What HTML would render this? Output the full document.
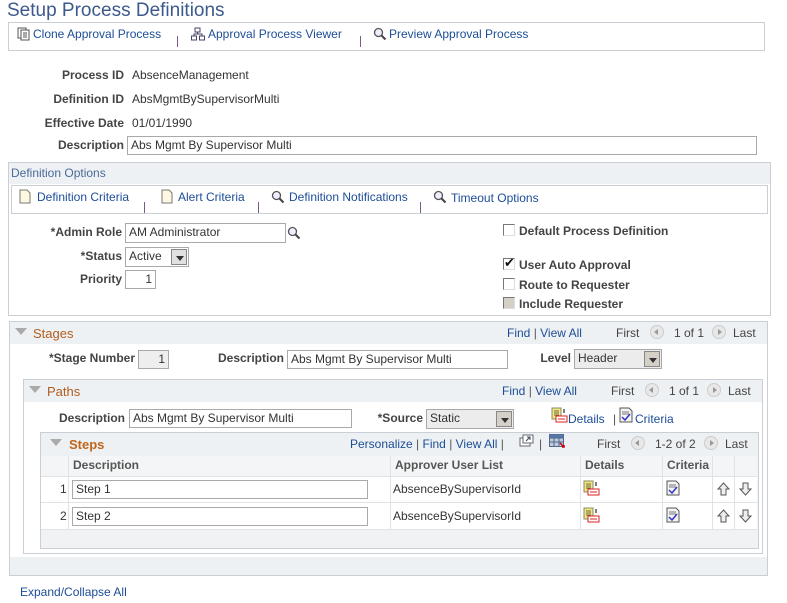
<!DOCTYPE html>
<html><head><meta charset="utf-8">
<style>
*{margin:0;padding:0;box-sizing:border-box}
body{width:787px;height:603px;background:#fff;font-family:"Liberation Sans",Arial,sans-serif;font-size:12px;color:#333;position:relative;overflow:hidden}
.a{position:absolute;white-space:nowrap}
.lbl{font-weight:bold;color:#444;text-align:right}
.lnk{color:#1c4d96}
.box{position:absolute;border:1px solid #c9cfd4}
.hdr{position:absolute;background:#eef1f3}
.inp{position:absolute;border:1px solid #a9a9a9;background:#fff;padding:1px 3px;font-size:12px;line-height:15px;color:#333}
.sel{position:absolute;border:1px solid #a9a9a9;background:#ececec;padding:1px 3px;line-height:15px}
.sel i{position:absolute;right:1px;top:1px;width:16px;bottom:1px;background:#d4d0c8;border:1px solid #888}
.sel i:after{content:"";position:absolute;left:4px;top:6px;border:4px solid transparent;border-top:5px solid #333}
.sep{position:absolute;width:1px;height:11px;background:#7a5a8a}
.cb{position:absolute;width:12px;height:12px;border:1px solid #777;border-right-color:#ddd;border-bottom-color:#ddd;background:#fff}
.tri{position:absolute;width:0;height:0;border:6px solid transparent;border-top:7px solid #aaa}
.nav{position:absolute;width:14px;height:14px;border-radius:50%;background:#e8e8e8;border:1px solid #ccc}
.nav.l:after{content:"";position:absolute;left:3px;top:3px;border:3px solid transparent;border-right:4px solid #999;border-left:0}
.nav.r:after{content:"";position:absolute;left:5px;top:3px;border:3px solid transparent;border-left:4px solid #999;border-right:0}
.ttl{color:#b25c1e;font-size:13px}
.col{position:absolute;top:456px;height:20px;border-right:1px solid #dfe3e6;font-weight:bold;color:#555;padding:2px 4px;background:#f4f5f6}
</style></head><body>

<div class="a" style="left:7px;top:0px;font-size:19px;color:#3d5a8c">Setup Process Definitions</div>

<div class="box" style="left:8px;top:22px;width:757px;height:29px"></div>
<svg class="a" style="left:17px;top:27px" width="14" height="14"><rect x="1" y="1" width="8" height="10" fill="#fff" stroke="#555"/><rect x="4" y="3" width="8" height="10" fill="#fff" stroke="#555"/><path d="M6 6h4M6 8h4M6 10h4" stroke="#555"/></svg>
<div class="a lnk" style="left:33px;top:27px">Clone Approval Process</div>
<div class="sep" style="left:177px;top:36px"></div>
<svg class="a" style="left:191px;top:27px" width="14" height="14"><rect x="4" y="1" width="5" height="4" fill="#fff" stroke="#446"/><rect x="0.5" y="9" width="5" height="4" fill="#fff" stroke="#446"/><rect x="8.5" y="9" width="5" height="4" fill="#fff" stroke="#446"/><path d="M6.5 5v2M3 9V7h8v2" stroke="#446" fill="none"/></svg>
<div class="a lnk" style="left:208px;top:27px">Approval Process Viewer</div>
<div class="sep" style="left:360px;top:36px"></div>
<svg class="a" style="left:373px;top:27px" width="14" height="14"><circle cx="5.5" cy="5.5" r="4" fill="#eef" stroke="#555" stroke-width="1.3"/><path d="M8.5 8.5l4 4" stroke="#444" stroke-width="2"/></svg>
<div class="a lnk" style="left:389px;top:27px">Preview Approval Process</div>

<div class="a lbl" style="right:663px;top:68px">Process ID</div>
<div class="a" style="left:132px;top:68px">AbsenceManagement</div>
<div class="a lbl" style="right:663px;top:92px">Definition ID</div>
<div class="a" style="left:132px;top:92px">AbsMgmtBySupervisorMulti</div>
<div class="a lbl" style="right:663px;top:116px">Effective Date</div>
<div class="a" style="left:132px;top:116px">01/01/1990</div>
<div class="a lbl" style="right:663px;top:138px">Description</div>
<div class="inp" style="left:127px;top:136px;width:630px;height:19px">Abs Mgmt By Supervisor Multi</div>

<div class="box" style="left:8px;top:162px;width:763px;height:154px"></div>
<div class="hdr" style="left:9px;top:163px;width:761px;height:21px"></div>
<div class="a" style="left:11px;top:166px;color:#4a6a9a">Definition Options</div>
<div class="box" style="left:11px;top:185px;width:757px;height:29px;background:#fff"></div>
<svg class="a" style="left:19px;top:189px" width="12" height="15"><path d="M1 1h7l3 3v10H1z" fill="#fff8e0" stroke="#777"/></svg>
<div class="a lnk" style="left:37px;top:190px">Definition Criteria</div>
<div class="sep" style="left:144px;top:202px"></div>
<svg class="a" style="left:161px;top:189px" width="12" height="15"><path d="M1 1h7l3 3v10H1z" fill="#fff8e0" stroke="#777"/></svg>
<div class="a lnk" style="left:178px;top:190px">Alert Criteria</div>
<div class="sep" style="left:258px;top:202px"></div>
<svg class="a" style="left:271px;top:190px" width="14" height="14"><circle cx="5.5" cy="5.5" r="4" fill="#eef" stroke="#555" stroke-width="1.3"/><path d="M8.5 8.5l4 4" stroke="#444" stroke-width="2"/></svg>
<div class="a lnk" style="left:289px;top:190px">Definition Notifications</div>
<div class="sep" style="left:420px;top:202px"></div>
<svg class="a" style="left:433px;top:190px" width="14" height="14"><circle cx="5.5" cy="5.5" r="4" fill="#eef" stroke="#555" stroke-width="1.3"/><path d="M8.5 8.5l4 4" stroke="#444" stroke-width="2"/></svg>
<div class="a lnk" style="left:451px;top:191px">Timeout Options</div>

<div class="a lbl" style="right:665px;top:225px">*Admin Role</div>
<div class="inp" style="left:125px;top:223px;width:161px;height:20px">AM Administrator</div>
<svg class="a" style="left:287px;top:226px" width="14" height="14"><circle cx="5.5" cy="5.5" r="4" fill="#eef" stroke="#555" stroke-width="1.3"/><path d="M8.5 8.5l4 4" stroke="#444" stroke-width="2"/></svg>
<div class="a lbl" style="right:665px;top:249px">*Status</div>
<div class="sel" style="left:125px;top:247px;width:64px;height:20px;background:#fff">Active<i style="background:#e0e0e0"></i></div>
<div class="a lbl" style="right:665px;top:272px">Priority</div>
<div class="inp" style="left:125px;top:270px;width:31px;height:19px;text-align:right">1</div>

<div class="cb" style="left:503px;top:224px"></div>
<div class="a lbl" style="left:519px;top:224px;text-align:left">Default Process Definition</div>
<div class="cb" style="left:503px;top:258px"></div>
<div class="a" style="left:504px;top:255px;font-size:13px;color:#111">✔</div>
<div class="a lbl" style="left:519px;top:258px;text-align:left">User Auto Approval</div>
<div class="cb" style="left:503px;top:278px"></div>
<div class="a lbl" style="left:519px;top:278px;text-align:left">Route to Requester</div>
<div class="cb" style="left:503px;top:297px;background:#d4d0c8"></div>
<div class="a lbl" style="left:519px;top:297px;text-align:left">Include Requester</div>

<!-- Stages -->
<div class="box" style="left:9px;top:321px;width:759px;height:255px"></div>
<div class="hdr" style="left:10px;top:322px;width:757px;height:22px"></div>
<div class="hdr" style="left:10px;top:557px;width:757px;height:18px"></div>
<div class="tri" style="left:15px;top:328px"></div>
<div class="a ttl" style="left:33px;top:326px">Stages</div>
<div class="a lnk" style="left:507px;top:326px">Find <span style="color:#555">|</span> View All</div>
<div class="a" style="left:616px;top:326px;color:#444">First</div>
<div class="nav l" style="left:650px;top:325px"></div>
<div class="a" style="left:674px;top:326px;color:#444">1 of 1</div>
<div class="nav r" style="left:712px;top:325px"></div>
<div class="a" style="left:733px;top:326px;color:#444">Last</div>

<div class="a lbl" style="right:652px;top:351px">*Stage Number</div>
<div class="inp" style="left:138px;top:350px;width:31px;height:19px;text-align:right;background:#eee">1</div>
<div class="a lbl" style="right:503px;top:351px">Description</div>
<div class="inp" style="left:287px;top:350px;width:221px;height:19px">Abs Mgmt By Supervisor Multi</div>
<div class="a lbl" style="right:216px;top:351px">Level</div>
<div class="sel" style="left:574px;top:349px;width:88px;height:20px">Header<i></i></div>

<!-- Paths -->
<div class="box" style="left:23px;top:379px;width:740px;height:175px"></div>
<div class="hdr" style="left:24px;top:380px;width:738px;height:22px"></div>
<div class="tri" style="left:29px;top:386px"></div>
<div class="a ttl" style="left:47px;top:384px">Paths</div>
<div class="a lnk" style="left:502px;top:384px">Find <span style="color:#555">|</span> View All</div>
<div class="a" style="left:611px;top:384px;color:#444">First</div>
<div class="nav l" style="left:645px;top:383px"></div>
<div class="a" style="left:669px;top:384px;color:#444">1 of 1</div>
<div class="nav r" style="left:707px;top:383px"></div>
<div class="a" style="left:728px;top:384px;color:#444">Last</div>

<div class="a lbl" style="right:662px;top:411px">Description</div>
<div class="inp" style="left:129px;top:409px;width:223px;height:19px">Abs Mgmt By Supervisor Multi</div>
<div class="a lbl" style="right:364px;top:411px">*Source</div>
<div class="sel" style="left:426px;top:409px;width:88px;height:20px">Static<i></i></div>
<svg class="a" style="left:551px;top:407px" width="18" height="17"><rect x="1" y="1" width="9" height="11" fill="#f5e87a" stroke="#886"/><path d="M3 4h5M3 6h5M3 8h5" stroke="#665"/><rect x="5" y="9" width="11" height="6" fill="#fff" stroke="#d22"/><path d="M7 12h7" stroke="#d22"/><path d="M13 2v4" stroke="#000"/></svg>
<div class="a lnk" style="left:568px;top:412px">Details</div>
<div class="a" style="left:613px;top:412px;color:#555">|</div>
<svg class="a" style="left:619px;top:407px" width="14" height="16"><path d="M1 1h9l3 3v11H1z" fill="#f4f4f4" stroke="#555"/><path d="M3 5h7M3 7h7" stroke="#777"/><path d="M3 10l3 3 5-6" stroke="#33c" stroke-width="1.5" fill="none"/></svg>
<div class="a lnk" style="left:635px;top:412px">Criteria</div>

<!-- Steps -->
<div class="box" style="left:40px;top:432px;width:719px;height:117px;background:#f0f2f4"></div>
<div class="hdr" style="left:41px;top:433px;width:717px;height:23px;background:#eef1f3"></div>
<div class="tri" style="left:50px;top:439px"></div>
<div class="a" style="left:69px;top:437px;color:#c0661c;font-weight:bold;font-size:13px">Steps</div>
<div class="a lnk" style="left:350px;top:437px">Personalize <span style="color:#555">|</span> Find <span style="color:#555">|</span> View All <span style="color:#555">|</span></div>
<svg class="a" style="left:519px;top:434px" width="16" height="14"><rect x="1" y="4" width="10" height="8" fill="#fff" stroke="#667"/><rect x="4" y="1" width="10" height="8" fill="#fff" stroke="#667"/><path d="M7 7l4-4M8 3h3v3" stroke="#445" fill="none"/></svg>
<div class="a" style="left:539px;top:437px;color:#555">|</div>
<svg class="a" style="left:549px;top:434px" width="17" height="15"><rect x="0.5" y="0.5" width="14" height="12" fill="#bcd" stroke="#568"/><path d="M0 4h15M0 8h15M5 0v13M10 0v13" stroke="#568"/><rect x="0.5" y="0.5" width="14" height="3" fill="#57a"/><path d="M11 9l4 4M13 13h2v-2" stroke="#c00" stroke-width="1.5" fill="none"/></svg>
<div class="a" style="left:597px;top:437px;color:#444">First</div>
<div class="nav l" style="left:631px;top:436px"></div>
<div class="a" style="left:655px;top:437px;color:#444">1-2 of 2</div>
<div class="nav r" style="left:704px;top:436px"></div>
<div class="a" style="left:725px;top:437px;color:#444">Last</div>

<div class="col" style="left:41px;width:28px"></div>
<div class="col" style="left:69px;width:322px">Description</div>
<div class="col" style="left:391px;width:190px">Approver User List</div>
<div class="col" style="left:581px;width:82px">Details</div>
<div class="col" style="left:663px;width:50px">Criteria</div>
<div class="col" style="left:713px;width:22px"></div>
<div class="col" style="left:735px;width:22px;border-right:none"></div>

<div class="a" style="left:41px;top:476px;width:716px;height:53px;background:#fff"></div>
<div class="a" style="left:41px;top:476px;width:716px;height:1px;background:#dfe3e6"></div>
<div class="a" style="left:41px;top:502px;width:716px;height:1px;background:#dfe3e6"></div>
<div class="a" style="left:41px;top:529px;width:716px;height:1px;background:#dfe3e6"></div>
<div class="a" style="left:68px;top:476px;width:1px;height:53px;background:#dfe3e6"></div>
<div class="a" style="left:390px;top:476px;width:1px;height:53px;background:#dfe3e6"></div>
<div class="a" style="left:580px;top:476px;width:1px;height:53px;background:#dfe3e6"></div>
<div class="a" style="left:662px;top:476px;width:1px;height:53px;background:#dfe3e6"></div>
<div class="a" style="left:712px;top:476px;width:1px;height:53px;background:#dfe3e6"></div>
<div class="a" style="left:734px;top:476px;width:1px;height:53px;background:#dfe3e6"></div>

<div class="a" style="left:60px;top:482px">1</div>
<div class="inp" style="left:72px;top:480px;width:296px;height:19px">Step 1</div>
<div class="a" style="left:393px;top:482px">AbsenceBySupervisorId</div>
<div class="a" style="left:60px;top:509px">2</div>
<div class="inp" style="left:72px;top:507px;width:296px;height:19px">Step 2</div>
<div class="a" style="left:393px;top:509px">AbsenceBySupervisorId</div>

<svg class="a" style="left:583px;top:480px" width="18" height="17"><rect x="1" y="1" width="9" height="11" fill="#f5e87a" stroke="#886"/><path d="M3 4h5M3 6h5M3 8h5" stroke="#665"/><rect x="5" y="9" width="11" height="6" fill="#fff" stroke="#d22"/><path d="M7 12h7" stroke="#d22"/><path d="M13 2v4" stroke="#000"/></svg>
<svg class="a" style="left:583px;top:507px" width="18" height="17"><rect x="1" y="1" width="9" height="11" fill="#f5e87a" stroke="#886"/><path d="M3 4h5M3 6h5M3 8h5" stroke="#665"/><rect x="5" y="9" width="11" height="6" fill="#fff" stroke="#d22"/><path d="M7 12h7" stroke="#d22"/><path d="M13 2v4" stroke="#000"/></svg>
<svg class="a" style="left:666px;top:480px" width="14" height="16"><path d="M1 1h9l3 3v11H1z" fill="#f4f4f4" stroke="#555"/><path d="M3 5h7M3 7h7" stroke="#777"/><path d="M3 10l3 3 5-6" stroke="#33c" stroke-width="1.5" fill="none"/></svg>
<svg class="a" style="left:666px;top:507px" width="14" height="16"><path d="M1 1h9l3 3v11H1z" fill="#f4f4f4" stroke="#555"/><path d="M3 5h7M3 7h7" stroke="#777"/><path d="M3 10l3 3 5-6" stroke="#33c" stroke-width="1.5" fill="none"/></svg>
<svg class="a" style="left:717px;top:482px" width="13" height="14"><path d="M6.5 1L12 7H9v6H4V7H1z" fill="#eee" stroke="#555"/></svg>
<svg class="a" style="left:739px;top:482px" width="13" height="14"><path d="M6.5 13L12 7H9V1H4v6H1z" fill="#eee" stroke="#555"/></svg>
<svg class="a" style="left:717px;top:509px" width="13" height="14"><path d="M6.5 1L12 7H9v6H4V7H1z" fill="#eee" stroke="#555"/></svg>
<svg class="a" style="left:739px;top:509px" width="13" height="14"><path d="M6.5 13L12 7H9V1H4v6H1z" fill="#eee" stroke="#555"/></svg>

<div class="a lnk" style="left:20px;top:585px">Expand/Collapse All</div>
</body></html>
